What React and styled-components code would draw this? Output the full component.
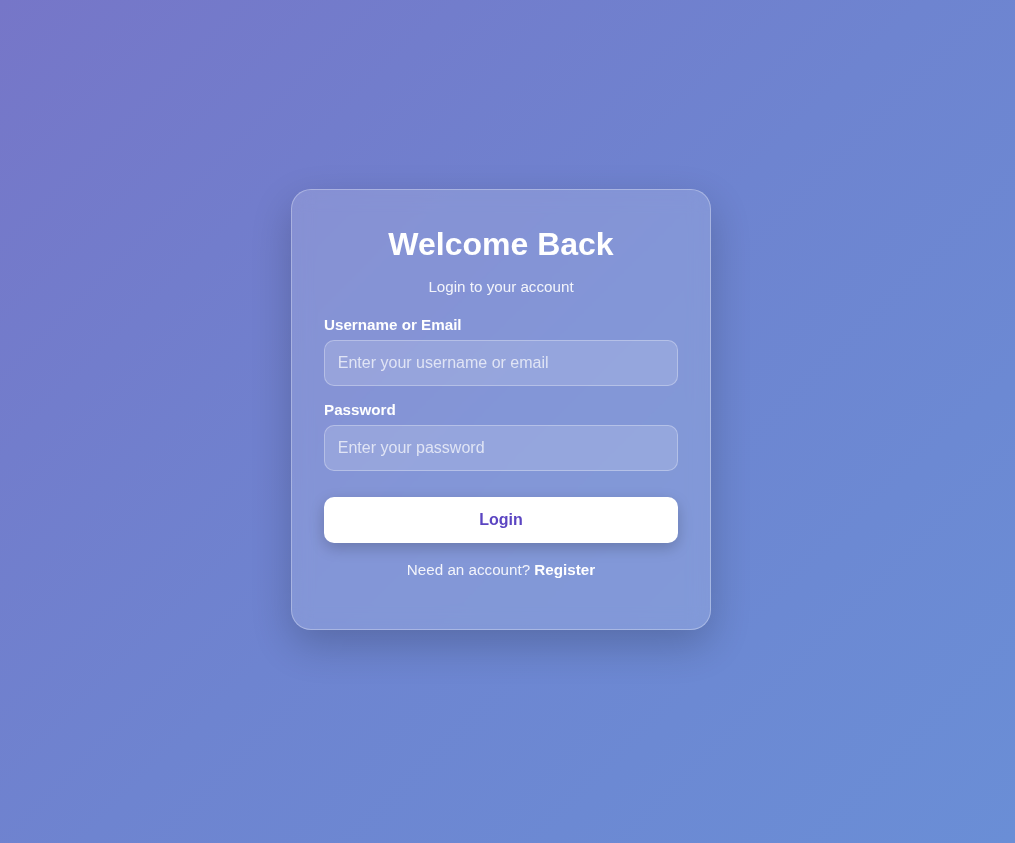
import React from "react"
import styled, { createGlobalStyle } from "styled-components"

const GlobalStyle = createGlobalStyle`
  * {
    box-sizing: border-box;
  }
  html,
  body {
    margin: 0;
    padding: 0;
  }
  body {
    font-family: "Liberation Sans", Arial, sans-serif;
    background: linear-gradient(135deg, #7676c8 0%, #6e84d0 50%, #6a8ed6 100%);
    min-height: 100vh;
  }
`

const App = () => {
  return (
    <>
      <GlobalStyle />
      <Page>
        <Card>
          <Title>Welcome Back</Title>
          <Subtitle>Login to your account</Subtitle>
          <form onSubmit={(e) => e.preventDefault()}>
            <Field>
              <Label htmlFor="user">Username or Email</Label>
              <Input id="user" type="text" placeholder="Enter your username or email" />
            </Field>
            <Field>
              <Label htmlFor="pass">Password</Label>
              <Input id="pass" type="password" placeholder="Enter your password" />
            </Field>
            <Button type="submit">Login</Button>
          </form>
          <Footer>
            Need an account? <a href="#register">Register</a>
          </Footer>
        </Card>
      </Page>
    </>
  )
}

export default App

const Page = styled.main`
  min-height: 100vh;
  display: flex;
  align-items: center;
  justify-content: center;
  padding: 0 13px 24px 0;
`

const Card = styled.div`
  width: 420px;
  padding: 36px 32px 51px;
  border-radius: 20px;
  background: rgba(255, 255, 255, 0.15);
  border: 1px solid rgba(255, 255, 255, 0.3);
  box-shadow: 0 15px 40px rgba(0, 0, 0, 0.2);
  backdrop-filter: blur(10px);
  color: white;
`

const Title = styled.h1`
  margin: 0 0 15px;
  font-size: 32px;
  line-height: 37px;
  font-weight: 700;
  text-align: center;
`

const Subtitle = styled.p`
  margin: 0 0 21px;
  font-size: 15.2px;
  line-height: 17px;
  text-align: center;
  color: rgba(255, 255, 255, 0.9);
`

const Field = styled.div`
  display: flex;
  flex-direction: column;
  gap: 7px;
  margin-bottom: 15px;
`

const Label = styled.label`
  font-size: 15.2px;
  line-height: 17px;
  font-weight: 700;
`

const Input = styled.input`
  height: 46px;
  width: 100%;
  padding: 0 12.8px;
  font-family: inherit;
  font-size: 16px;
  color: white;
  background: rgba(255, 255, 255, 0.15);
  border: 1px solid rgba(255, 255, 255, 0.3);
  border-radius: 10px;
  outline: none;

  &::placeholder {
    color: rgba(255, 255, 255, 0.7);
  }
`

const Button = styled.button`
  display: block;
  width: 100%;
  height: 46px;
  margin-top: 26px;
  border: none;
  border-radius: 10px;
  background: white;
  color: #5b45c2;
  font-family: inherit;
  font-size: 16px;
  font-weight: 700;
  cursor: pointer;
  box-shadow: 0 5px 15px rgba(0, 0, 0, 0.2);
`

const Footer = styled.p`
  margin: 18px 0 0;
  font-size: 15.2px;
  line-height: 17px;
  text-align: center;
  color: rgba(255, 255, 255, 0.9);

  a {
    color: white;
    font-weight: 700;
    text-decoration: none;
  }
`
